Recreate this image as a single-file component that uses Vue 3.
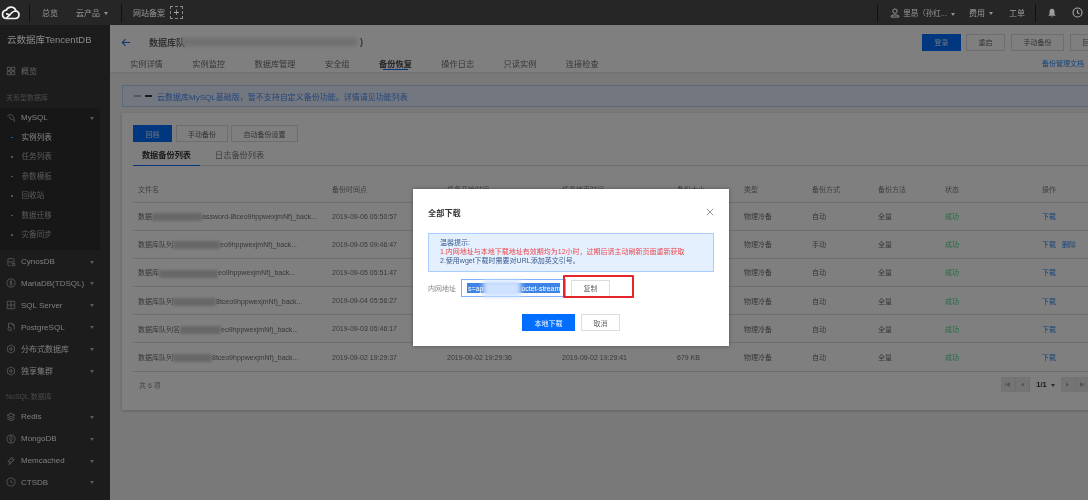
<script setup>
const sideTop = [
  { name: 'CynosDB', icon: 'db' },
  { name: 'MariaDB(TDSQL)', icon: 'coin' },
  { name: 'SQL Server', icon: 'grid' },
  { name: 'PostgreSQL', icon: 'page' },
  { name: '分布式数据库', icon: 'ring' },
  { name: '独享集群', icon: 'ring' }
]
const sideNoSql = [
  { name: 'Redis', icon: 'stack' },
  { name: 'MongoDB', icon: 'leaf' },
  { name: 'Memcached', icon: 'bolt' },
  { name: 'CTSDB', icon: 'clock' }
]
const icons = {
  db: 'M3 3.5C3 2 13 2 13 3.5V7C13 8.5 3 8.5 3 7ZM3 7V12.5C3 14 8 14 8 14M10 10H14V14H10Z',
  coin: 'M8 1.5A6.5 6.5 0 1 0 8 14.5A6.5 6.5 0 1 0 8 1.5ZM10 5.5C8.5 4.5 6 5 6 6.5S10 8 10 9.5S7.5 11.5 6 10.5M8 4V12',
  grid: 'M2 2H14V14H2ZM8 2V14M2 8H14',
  page: 'M4 2H10L13 5V12M4 2V9M10 2V5H13M3 11A2.5 2.5 0 1 0 8 11A2.5 2.5 0 1 0 3 11M7.5 13L9.5 15',
  ring: 'M8 1.5L13.5 4.5V11.5L8 14.5L2.5 11.5V4.5ZM8 6A2 2 0 1 0 8 10A2 2 0 1 0 8 6',
  stack: 'M8 2L14 5L8 8L2 5ZM2 8L8 11L14 8M2 11L8 14L14 11',
  leaf: 'M8 1.5A6.5 6.5 0 1 0 8 14.5A6.5 6.5 0 1 0 8 1.5ZM8 3C10.5 6 10.5 9 8 11C5.5 9 5.5 6 8 3ZM8 11V14.5',
  bolt: 'M9 2L3 9H7L5 14L13 6H9L11 2',
  clock: 'M8 1.5A6.5 6.5 0 1 0 8 14.5A6.5 6.5 0 1 0 8 1.5ZM8 4.5V8.5L11 10'
}
const subs = ['实例列表', '任务列表', '参数模板', '回收站', '数据迁移', '灾备同步']
const tabs = ['实例详情', '实例监控', '数据库管理', '安全组', '备份恢复', '操作日志', '只读实例', '连接检查']

// end: x where the blur patch stops, relative to the cell text start
// only the last row's task times show, the modal covers the others
const rows = [
  { pre: '数据', end: 64, tail: 'assword-8tceo9hppwexjmNf)_back...', t1: '2019-09-06 05:50:57', mode: '自动' },
  { pre: '数据库队列', end: 82, tail: 'eo9hppwexjmNf)_back...', t1: '2019-09-05 09:46:47', mode: '手动', del: true },
  { pre: '数据库', end: 80, tail: 'eo9hppwexjmNf)_back...', t1: '2019-09-05 05:51:47', mode: '自动' },
  { pre: '数据库队列', end: 78, tail: '8tceo9hppwexjmNf)_back...', t1: '2019-09-04 05:56:27', mode: '自动' },
  { pre: '数据库队列名', end: 83, tail: 'eo9hppwexjmNf)_back...', t1: '2019-09-03 05:46:17', mode: '自动' },
  { pre: '数据库队列', end: 74, tail: '8tceo9hppwexjmNf)_back...', t1: '2019-09-02 19:29:37', t2: '2019-09-02 19:29:36', t3: '2019-09-02 19:29:41', size: '679 KB', mode: '自动' }
]
const patchWidth = (r) => r.end - r.pre.length * 7
</script>

<template>
  <div class="page">
    <header class="topbar">
      <svg class="logo" viewBox="0 0 20 15" width="20" height="15">
        <path d="M5 13.5H14.5A3.8 3.8 0 0 0 15 6A5.2 5.2 0 0 0 5.2 5.2A4.2 4.2 0 0 0 5 13.5ZM5 13.5L11 7.5C12.5 6 15 6 15 6M5 9C6.5 8.5 8 9.5 9 11" fill="none" stroke="#f4f4f4" stroke-width="1.7" />
      </svg>
      <i class="vline first"></i>
      <span class="nav n1">总览</span>
      <span class="nav n2">云产品<b class="caret"></b></span>
      <i class="vline second"></i>
      <span class="nav n3">网站备案</span>
      <span class="plus">+</span>
      <span class="spacer"></span>
      <i class="vline"></i>
      <svg class="uicon" viewBox="0 0 16 16" width="10" height="10">
        <path d="M8 1.5A3.5 3.5 0 1 0 8 8.5A3.5 3.5 0 1 0 8 1.5ZM2 14.5V12.5C4 10.5 12 10.5 14 12.5V14.5Z" fill="none" stroke="#9a9a9a" stroke-width="1.5" />
      </svg>
      <span class="nav n4">里昂（孙红...<b class="caret"></b></span>
      <span class="nav n5">费用<b class="caret"></b></span>
      <span class="nav n6">工单</span>
      <i class="vline third"></i>
      <svg class="bell" viewBox="0 0 16 16" width="10" height="10">
        <path d="M8 1C5 1 4 3.5 4 6V10L2 12.5H14L12 10V6C12 3.5 11 1 8 1ZM6.5 13.5H9.5L8 15Z" fill="#9c9c9c" />
      </svg>
      <svg class="clock" viewBox="0 0 16 16" width="11" height="11">
        <path :d="icons.clock" fill="none" stroke="#a8a8a8" stroke-width="1.6" />
      </svg>
    </header>

    <div class="body">
      <aside class="sidebar">
        <div class="side-title">云数据库TencentDB</div>
        <div class="side-row overview">
          <svg viewBox="0 0 16 16" width="10" height="10">
            <path d="M2 2H7V7H2ZM9 2H14V7H9ZM2 9H7V14H2ZM9 9H14V14H9Z" fill="none" stroke="#5c5c5c" stroke-width="1.4" />
          </svg>
          <span>概览</span>
        </div>
        <div class="side-label">关系型数据库</div>
        <div class="side-group">
          <div class="side-row mysql">
            <svg viewBox="0 0 16 16" width="10" height="10">
              <path d="M2 5C4 1.5 10 2 12 6C13 9 13 12 14 14M12 11C9 11 6 9 5 5" fill="none" stroke="#5c5c5c" stroke-width="1.4" />
            </svg>
            <span>MySQL</span>
            <b class="arrow"></b>
          </div>
          <div v-for="(s, i) in subs" :key="s" class="sub" :class="{ on: i === 0 }">
            <i class="dot"></i>{{ s }}
          </div>
        </div>
        <div v-for="item in sideTop" :key="item.name" class="side-row">
          <svg viewBox="0 0 16 16" width="10" height="10">
            <path :d="icons[item.icon]" fill="none" stroke="#5c5c5c" stroke-width="1.3" />
          </svg>
          <span>{{ item.name }}</span>
          <b class="arrow"></b>
        </div>
        <div class="side-label nosql">NoSQL 数据库</div>
        <div v-for="item in sideNoSql" :key="item.name" class="side-row">
          <svg viewBox="0 0 16 16" width="10" height="10">
            <path :d="icons[item.icon]" fill="none" stroke="#5c5c5c" stroke-width="1.3" />
          </svg>
          <span>{{ item.name }}</span>
          <b class="arrow"></b>
        </div>
      </aside>

      <main class="main">
        <section class="head">
          <div class="head-top">
            <svg class="back" viewBox="0 0 12 10" width="10" height="9">
              <path d="M11 5H1.5M5.5 1L1.5 5L5.5 9" fill="none" stroke="#1f6fe0" stroke-width="1.3" />
            </svg>
            <span class="title">数据库队</span>
            <span class="title-blur"></span>
            <span class="title rest">)</span>
            <span class="spacer"></span>
            <button class="btn primary">登录</button>
            <button class="btn">重启</button>
            <button class="btn wide">手动备份</button>
            <button class="btn last">回档</button>
          </div>
          <nav class="tabs">
            <span v-for="t in tabs" :key="t" class="tab" :class="{ on: t === '备份恢复' }">{{ t }}</span>
            <span class="spacer"></span>
            <a class="doc">备份管理文档</a>
          </nav>
        </section>

        <div class="alert">
          <i class="mark light"></i><i class="mark dark"></i>
          <span>云数据库MySQL基础版，暂不支持自定义备份功能。详情请见功能列表</span>
        </div>

        <section class="card">
          <div class="actions">
            <button class="btn primary">回档</button>
            <button class="btn wide">手动备份</button>
            <button class="btn wider">自动备份设置</button>
          </div>
          <div class="subtabs">
            <span class="subtab on">数据备份列表</span>
            <span class="subtab">日志备份列表</span>
          </div>
          <table class="grid">
            <colgroup>
              <col style="width: 194px" /><col style="width: 115px" /><col style="width: 115px" />
              <col style="width: 115px" /><col style="width: 67px" /><col style="width: 68px" />
              <col style="width: 66px" /><col style="width: 67px" /><col style="width: 97px" />
              <col style="width: 52px" />
            </colgroup>
            <thead>
              <tr>
                <th>文件名</th><th>备份时间点</th><th>任务开始时间</th><th>任务结束时间</th><th>备份大小</th>
                <th>类型</th><th>备份方式</th><th>备份方法</th><th>状态</th><th>操作</th>
              </tr>
            </thead>
            <tbody>
              <tr v-for="r in rows" :key="r.t1">
                <td class="file">{{ r.pre }}<i class="patch" :style="{ width: patchWidth(r) + 'px' }"></i>{{ r.tail }}</td>
                <td>{{ r.t1 }}</td>
                <td>{{ r.t2 }}</td>
                <td>{{ r.t3 }}</td>
                <td>{{ r.size }}</td>
                <td>物理冷备</td>
                <td>{{ r.mode }}</td>
                <td>全量</td>
                <td class="ok">成功</td>
                <td class="ops"><a>下载</a><a v-if="r.del">删除</a></td>
              </tr>
            </tbody>
          </table>
          <div class="foot">
            <span>共 6 项</span>
            <div class="pager">
              <span class="pg">
                <svg viewBox="0 0 8 8" width="5" height="5"><path d="M1 1V7M7 1L3 4L7 7Z" fill="#9a9a9a" stroke="#9a9a9a" /></svg>
              </span>
              <span class="pg">
                <svg viewBox="0 0 8 8" width="5" height="5"><path d="M6 1L2 4L6 7Z" fill="#9a9a9a" /></svg>
              </span>
              <span class="pg-num">1/1<b class="caret dark"></b></span>
              <span class="pg">
                <svg viewBox="0 0 8 8" width="5" height="5"><path d="M2 1L6 4L2 7Z" fill="#9a9a9a" /></svg>
              </span>
              <span class="pg">
                <svg viewBox="0 0 8 8" width="5" height="5"><path d="M7 1V7M1 1L5 4L1 7Z" fill="#9a9a9a" stroke="#9a9a9a" /></svg>
              </span>
            </div>
          </div>
        </section>

        <div class="mask">
          <div class="modal">
            <div class="modal-head">
              <strong>全部下载</strong>
              <svg viewBox="0 0 10 10" width="8" height="8">
                <path d="M1 1L9 9M9 1L1 9" stroke="#777" stroke-width="1" />
              </svg>
            </div>
            <div class="tip">
              <div>温馨提示:</div>
              <div class="red">1.内网地址与本地下载地址有效期均为12小时，过期后请主动刷新页面重新获取</div>
              <div>2.使用wget下载时需要对URL添加英文引号。</div>
            </div>
            <div class="addr">
              <label>内网地址</label>
              <div class="input">
                <span class="sel">s=ap<i class="sel-blur"></i>octet-stream</span>
              </div>
              <button class="btn copy">复制</button>
            </div>
            <div class="modal-foot">
              <button class="btn solid">本地下载</button>
              <button class="btn plain">取消</button>
            </div>
            <i class="redbox"></i>
          </div>
        </div>
      </main>
    </div>
  </div>
</template>

<style scoped>
.page {
  width: 1088px;
  height: 500px;
  overflow: hidden;
  display: flex;
  flex-direction: column;
  font-family: "Liberation Sans", "Noto Sans CJK SC", sans-serif;
  font-size: 7px;
  filter: blur(0.55px);
}
.spacer { flex: 1; }

.topbar {
  height: 25px;
  flex: none;
  display: flex;
  align-items: center;
  background: #262626;
  color: #9a9a9a;
  font-size: 8px;
}
.logo { margin-left: 1px; flex: none; }
.vline { width: 1px; height: 18px; background: #111; flex: none; }
.vline.first { margin-left: 8px; }
.vline.second { margin-left: 13px; }
.vline.third { margin-left: 10px; }
.nav { white-space: nowrap; }
.n1 { margin-left: 12px; }
.n2 { margin-left: 18px; }
.n3 { margin-left: 11px; }
.n4 { margin-left: 3px; font-size: 7.5px; }
.n5 { margin-left: 14px; }
.n6 { margin-left: 16px; }
.caret {
  display: inline-block;
  margin-left: 4px;
  vertical-align: middle;
  border: 2.5px solid transparent;
  border-top: 3px solid #8f8f8f;
  border-bottom: 0;
}
.caret.dark { border-top-color: #555; }
.plus {
  width: 13px;
  height: 13px;
  margin-left: 5px;
  box-sizing: border-box;
  border: 1px dashed #8a8a8a;
  color: #aaa;
  font-size: 10px;
  line-height: 11px;
  text-align: center;
  flex: none;
}
.uicon { margin-left: 12px; flex: none; }
.bell { margin-left: 11px; flex: none; }
.clock { margin-left: 15px; margin-right: 5px; flex: none; }

.body { flex: 1; display: flex; min-height: 0; }

.sidebar {
  width: 110px;
  flex: none;
  background: #1c1c1c;
  color: #808080;
  font-size: 8px;
  overflow: hidden;
}
.side-title {
  height: 30px;
  line-height: 30px;
  padding-left: 7px;
  font-size: 9.5px;
  color: #8c8c8c;
}
.side-row {
  height: 21.8px;
  width: 100px;
  display: flex;
  align-items: center;
  padding-left: 6px;
  box-sizing: border-box;
  position: relative;
  white-space: nowrap;
}
.side-row svg { margin-right: 5px; flex: none; }
.overview { margin-top: 5px; color: #666; }
.side-label {
  margin-top: 8px;
  height: 16px;
  line-height: 16px;
  padding-left: 6px;
  font-size: 7px;
  color: #4a4a4a;
}
.side-label.nosql { margin-top: 7px; margin-bottom: 1.5px; }
.side-group {
  margin-top: 2px;
  margin-bottom: 1px;
  width: 100px;
  height: 142px;
  background: #171717;
}
.mysql { height: 20px; }
.arrow {
  position: absolute;
  right: 6px;
  top: 50%;
  margin-top: -1px;
  border: 2px solid transparent;
  border-top: 3px solid #5a5a5a;
  border-bottom: 0;
}
.sub {
  height: 19.5px;
  line-height: 19.5px;
  padding-left: 11px;
  display: flex;
  align-items: center;
  font-size: 7.6px;
  color: #5c5c5c;
}
.sub.on { color: #888; }
.dot {
  width: 1.5px;
  height: 1.5px;
  margin-right: 9px;
  background: #555;
  flex: none;
}
.sub.on .dot { background: #0a5fd0; }

.main {
  flex: 1;
  min-width: 0;
  position: relative;
  overflow: hidden;
  background: #f2f2f2;
  color: #777;
}
.head {
  height: 47px;
  padding-left: 20px;
  background: #fff;
  box-sizing: border-box;
  width: 1000px;
  box-shadow: 0 1px 2px rgba(0, 0, 0, 0.08);
}
.head-top {
  height: 28px;
  padding-top: 6px;
  box-sizing: border-box;
  display: flex;
  align-items: center;
  width: 979px;
}
.back { margin-left: -9px; margin-right: 18px; flex: none; }
.title { font-size: 9px; color: #666; white-space: nowrap; font-weight: 600; }
.title-blur {
  width: 176px;
  height: 8px;
  margin-left: -4px;
  background: #dedede;
  filter: blur(2px);
}
.title.rest { margin-left: 3px; }
.btn {
  height: 17px;
  width: 39px;
  padding: 0;
  margin: 0;
  border: 1px solid #ddd;
  background: #fff;
  color: #666;
  font-family: inherit;
  font-size: 7px;
  flex: none;
}
.btn.primary { background: #006eff; border-color: #006eff; color: #d8e8ff; }
.btn.wide { width: 52px; }
.btn.wider { width: 67px; }
.head-top .btn { margin-left: 5px; }
.head-top .btn.wide { margin-left: 6px; width: 53px; }
.head-top .btn.last { margin-left: 6px; }
.tabs {
  height: 19px;
  display: flex;
  align-items: center;
  width: 954px;
  font-size: 8.2px;
  color: #6e6e6e;
  gap: 29.5px;
  position: relative;
}
.tab { white-space: nowrap; }
.tab.on { font-weight: 700; color: #444; box-shadow: 0 5px 0 -4px #006eff; }
.doc { font-size: 7px; color: #2a8cff; white-space: nowrap; }

.alert {
  margin: 13px 0 6px 12px;
  width: 1000px;
  height: 22px;
  box-sizing: border-box;
  padding-left: 11px;
  display: flex;
  align-items: center;
  background: #e6eeff;
  border: 1px solid #b9d2fa;
  color: #4a8cf0;
  font-size: 8px;
}
.mark { width: 7px; height: 2px; margin-right: 4px; flex: none; }
.mark.light { background: #aaa; }
.mark.dark { background: #333; margin-right: 5px; }

.card {
  margin-left: 12px;
  width: 1000px;
  height: 297px;
  box-sizing: border-box;
  padding: 12px 0 0 11px;
  background: #fff;
  box-shadow: 0 1px 3px rgba(0, 0, 0, 0.2);
}
.actions { display: flex; gap: 4px; }
.actions .btn.wider { margin-left: -1px; }
.subtabs {
  margin-top: 4px;
  width: 955px;
  height: 20px;
  box-sizing: border-box;
  border-bottom: 1px solid #ddd;
  display: flex;
  align-items: center;
  font-size: 8.2px;
  color: #777;
}
.subtab { height: 20px; line-height: 19px; white-space: nowrap; box-sizing: border-box; }
.subtab.on {
  width: 67px;
  margin-right: 15px;
  text-align: center;
  color: #333;
  font-weight: 700;
  border-bottom: 1px solid #006eff;
}
.grid {
  width: 956px;
  table-layout: fixed;
  border-collapse: collapse;
  font-size: 7px;
  color: #707070;
}
.grid th {
  height: 36px;
  padding: 10px 0 0 5px;
  box-sizing: border-box;
  font-weight: 400;
  text-align: left;
  color: #808080;
  border-bottom: 1px solid #ddd;
  white-space: nowrap;
}
.grid td {
  height: 28.2px;
  padding: 0 0 0 5px;
  box-sizing: border-box;
  border-bottom: 1px solid #ddd;
  white-space: nowrap;
  overflow: hidden;
}
.patch {
  display: inline-block;
  height: 8px;
  vertical-align: middle;
  background: #cfcfcf;
  filter: blur(1.5px);
}
.ok { color: #4cd98a; }
.ops a { color: #2a8cff; margin-right: 6px; }

.foot {
  width: 957px;
  height: 26px;
  padding-left: 6px;
  box-sizing: border-box;
  display: flex;
  align-items: center;
  justify-content: space-between;
  color: #8a8a8a;
  font-size: 7px;
}
.pager { display: flex; height: 15px; flex: none; }
.pg {
  width: 14.5px;
  display: flex;
  align-items: center;
  justify-content: center;
  background: #e9e9e9;
  border-right: 1px solid #ddd;
  box-sizing: border-box;
}
.pg-num {
  width: 31px;
  text-align: center;
  line-height: 15px;
  background: #fff;
  color: #333;
  font-size: 7.5px;
  font-weight: 700;
}

.mask {
  position: absolute;
  inset: 0;
  background: rgba(0, 0, 0, 0.5);
  padding: 164px 0 0 303px;
}
.modal {
  position: relative;
  width: 316px;
  height: 157px;
  box-sizing: border-box;
  padding: 15px 15px 0;
  background: #fff;
  color: #666;
  box-shadow: 0 0 4px rgba(0, 0, 0, 0.35);
}
.modal-head {
  height: 16px;
  display: flex;
  align-items: center;
  justify-content: space-between;
  font-size: 8.2px;
  color: #333;
}
.tip {
  margin-top: 13px;
  height: 39px;
  width: 286px;
  box-sizing: border-box;
  padding: 5px 11px;
  background: #e5f0ff;
  border: 1px solid #a9cdfd;
  color: #3a5a8c;
  font-size: 7px;
  line-height: 8.8px;
  white-space: nowrap;
}
.tip .red { color: #e8484d; }
.addr {
  margin-top: 7px;
  height: 18px;
  display: flex;
  align-items: center;
  font-size: 7px;
  color: #888;
}
.addr label { width: 33px; flex: none; white-space: nowrap; }
.input {
  width: 105px;
  height: 18px;
  box-sizing: border-box;
  border: 1px solid #7fb2ff;
  padding: 3px 5px;
  flex: none;
}
.sel {
  display: flex;
  align-items: center;
  height: 10px;
  width: 93px;
  padding-left: 1px;
  box-sizing: border-box;
  background: #3d84e6;
  color: #fff;
  white-space: nowrap;
  font-size: 7px;
}
.sel-blur {
  width: 38px;
  height: 17px;
  flex: none;
  background: #cfe2ff;
  filter: blur(2.5px);
}
.btn.copy { margin-left: 5px; height: 17px; }
.modal-foot {
  margin-top: 17px;
  display: flex;
  justify-content: center;
  gap: 6px;
}
.btn.solid {
  width: 53px;
  background: #006eff;
  border-color: #006eff;
  color: #fff;
}
.btn.plain { width: 39px; }
.redbox {
  position: absolute;
  left: 150px;
  top: 86px;
  width: 71px;
  height: 23px;
  box-sizing: border-box;
  border: 2px solid #e3262a;
  border-radius: 1px;
}
</style>

<style>
html, body { margin: 0; background: #1c1c1c; }
</style>
